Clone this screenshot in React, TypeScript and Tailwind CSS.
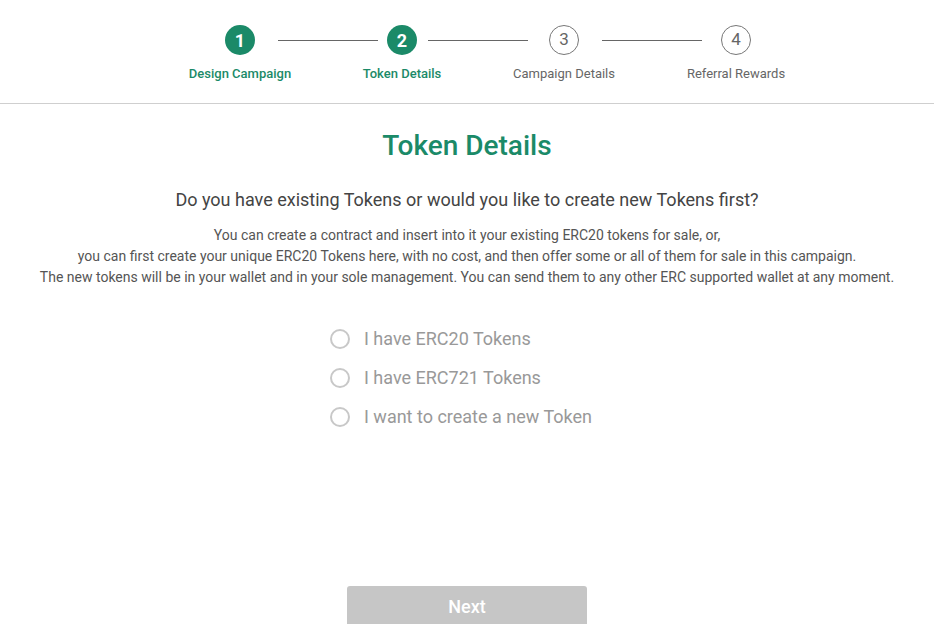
import React, { useState } from 'react'

const GREEN = 'text-[#1b8a68]'

const steps = [
  { n: 1, label: 'Design Campaign', done: true },
  { n: 2, label: 'Token Details', done: true },
  { n: 3, label: 'Campaign Details', done: false },
  { n: 4, label: 'Referral Rewards', done: false },
]

// gap before / after each connector line, measured from the mock
const lines = [
  { before: 'ml-[23px]', after: 'mr-[9px]' },
  { before: 'ml-[11px]', after: 'mr-[21px]' },
  { before: 'ml-[23px]', after: 'mr-[19px]' },
]

function Step({ n, label, done }: { n: number; label: string; done: boolean }) {
  return (
    <div className="flex w-[30px] shrink-0 flex-col items-center">
      {done ? (
        <div className="flex h-[30px] w-[30px] items-center justify-center rounded-full bg-[#1b8a68] text-[18px] font-bold text-white">
          {n}
        </div>
      ) : (
        <div className="flex h-[30px] w-[30px] items-center justify-center rounded-full border border-[#777] text-[17px] text-[#666]">
          {n}
        </div>
      )}
      <div
        className={`mt-[11px] whitespace-nowrap text-[13px] leading-4 ${
          done ? 'font-medium text-[#1b8a68]' : 'text-[#666]'
        }`}
      >
        {label}
      </div>
    </div>
  )
}

function Stepper() {
  return (
    <div className="h-[104px] border-b border-[#cfcfcf] pt-[25px]">
      <div className="flex items-start pl-[225px]">
        {steps.map((s, i) => (
          <React.Fragment key={s.n}>
            <Step {...s} />
            {i < lines.length && (
              <div className={`${lines[i].before} ${lines[i].after} mt-[14.5px] h-px w-[100px] shrink-0 bg-[#666]`} />
            )}
          </React.Fragment>
        ))}
      </div>
    </div>
  )
}

const options = ['I have ERC20 Tokens', 'I have ERC721 Tokens', 'I want to create a new Token']

export default function App() {
  const [picked, setPicked] = useState<number | null>(null)

  return (
    <div className="min-h-screen bg-white font-['Roboto','Liberation_Sans',sans-serif]">
      <Stepper />

      <div className="text-center">
        <h1 className={`mt-[25px] text-[28px] font-medium leading-[34px] ${GREEN}`}>Token Details</h1>
        <h2 className="mt-[25px] text-[18px] font-normal leading-6 text-[#444]">
          Do you have existing Tokens or would you like to create new Tokens first?
        </h2>
        <p className="mt-[13px] text-[14px] leading-[21px] text-[#555]">
          You can create a contract and insert into it your existing ERC20 tokens for sale, or,
          <br />
          you can first create your unique ERC20 Tokens here, with no cost, and then offer some or all of them for sale in this campaign.
          <br />
          The new tokens will be in your wallet and in your sole management. You can send them to any other ERC supported wallet at any moment.
        </p>
      </div>

      <div className="mt-[31px] flex flex-col pl-[330px]">
        {options.map((o, i) => (
          <label key={o} className="flex h-[39px] cursor-pointer items-center gap-[14px]" onClick={() => setPicked(i)}>
            <span className="flex h-[20px] w-[20px] items-center justify-center rounded-full border-2 border-[#c8c8c8]">
              {picked === i && <span className="h-[10px] w-[10px] rounded-full bg-[#1b8a68]" />}
            </span>
            <span className="text-[18px] text-[#999]">{o}</span>
          </label>
        ))}
      </div>

      <button
        className="mx-auto mt-[150px] flex h-[40px] w-[240px] items-center justify-center rounded-t-[3px] bg-[#c6c6c6] text-[18px] font-medium text-white"
        disabled={picked === null}
      >
        Next
      </button>
    </div>
  )
}
